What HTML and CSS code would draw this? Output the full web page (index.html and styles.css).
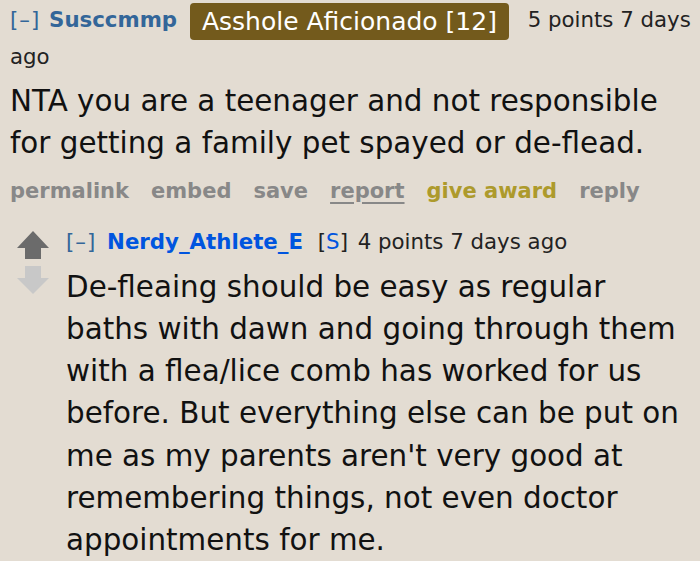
FILE: index.html
```html
<!DOCTYPE html>
<html lang="en">
<head>
<meta charset="utf-8">
<title>Comment</title>
<link rel="stylesheet" href="styles.css">
</head>
<body>
<div class="thread">
  <div class="comment">
    <p class="tagline"><a class="expand">[–]</a> <a class="author">Susccmmp</a> <span class="flair">Asshole Aficionado [12]</span> <span class="score">5 points</span> <time>7 days ago</time></p>
    <div class="md"><p>NTA you are a teenager and not responsible for getting a family pet spayed or de-flead.</p></div>
    <ul class="buttons">
      <li><a>permalink</a></li>
      <li><a>embed</a></li>
      <li><a>save</a></li>
      <li><a class="report">report</a></li>
      <li><a class="award">give award</a></li>
      <li><a>reply</a></li>
    </ul>
  </div>
  <div class="comment child">
    <div class="midcol">
      <svg class="arrow" width="32" height="28" viewBox="0 0 32 28"><path d="M16 0 L32 17 L24 17 L24 28 L8 28 L8 17 L0 17 Z" fill="#6b6b6b"/></svg>
      <svg class="arrow" width="32" height="28" viewBox="0 0 32 28"><path d="M8 0 L24 0 L24 12 L32 12 L16 28 L0 12 L8 12 Z" fill="#c8c8c8"/></svg>
    </div>
    <div class="entry">
      <p class="tagline"><a class="expand">[–]</a> <a class="author submitter">Nerdy_Athlete_E</a> <span class="op">[<a>S</a>]</span> <span class="score">4 points</span> <time>7 days ago</time></p>
      <div class="md"><p>De-fleaing should be easy as regular baths with dawn and going through them with a flea/lice comb has worked for us before. But everything else can be put on me as my parents aren't very good at remembering things, not even doctor appointments for me.</p></div>
    </div>
  </div>
</div>
</body>
</html>
```
FILE: styles.css
```css
html, body {
  margin: 0;
  padding: 0;
  background: #e3dcd2;
}
body {
  font-family: "DejaVu Sans", sans-serif;
  color: #111;
  width: 700px;
  height: 561px;
  overflow: hidden;
}
.thread {
  padding-left: 10px;
}
a { text-decoration: none; }
.tagline {
  margin: 0;
  padding-top: 3px;
  font-size: 21.3px;
  line-height: 34px;
  color: #222;
}
.expand {
  color: #336699;
  letter-spacing: 1px;
}
.author {
  color: #336699;
  font-weight: bold;
  margin-left: 2px;
}
.author.submitter {
  color: #0055df;
  margin-left: 4px;
  margin-right: 8px;
}
.flair {
  display: inline-block;
  background: #735a1c;
  color: #fff;
  font-size: 25px;
  line-height: 37px;
  padding: 0 12px;
  border-radius: 4px;
  margin: 0 12px 0 6px;
  vertical-align: top;
}
.op { margin-right: 3px; }
.op a { color: #0055df; }
.md {
  margin-top: 6px;
  font-size: 29.4px;
  line-height: 42.3px;
  color: #111;
}
.md p { margin: 0; }
.buttons {
  list-style: none;
  margin: 11px 0 0;
  padding: 0;
  display: flex;
  gap: 22px;
  font-size: 21px;
  line-height: 30px;
  font-weight: bold;
}
.buttons a { color: #888; }
.buttons .report {
  color: #888;
  text-decoration: underline;
  text-underline-offset: 4px;
}
.buttons .award { color: #ad9a2c; }
.child {
  display: flex;
  margin-top: 19px;
}
.midcol {
  width: 56px;
  flex: none;
  display: flex;
  flex-direction: column;
  gap: 7px;
  padding: 6px 0 0 7px;
  box-sizing: border-box;
}
.entry {
  width: 624px;
  flex: none;
}
.entry .tagline { padding-top: 0; }
.entry .md { margin-top: 7px; }
```
